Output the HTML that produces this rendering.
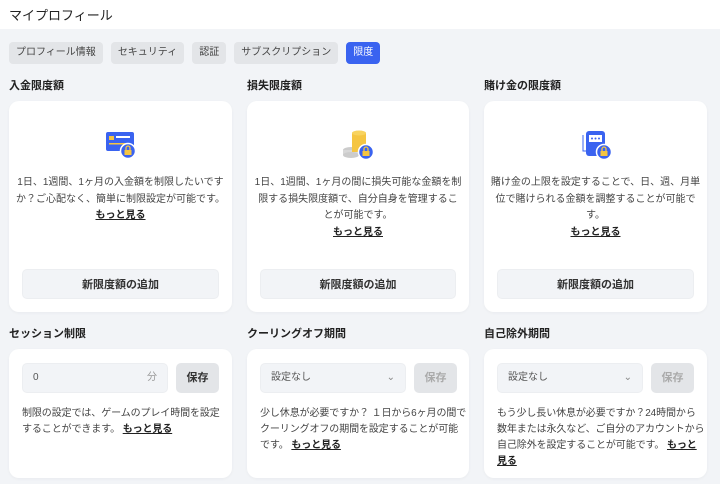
<!DOCTYPE html><html><head><meta charset="utf-8"><style>
*{margin:0;padding:0;box-sizing:border-box}
body{width:720px;height:484px;overflow:hidden;background:#f2f4f7;font-family:"Liberation Sans","Noto Sans CJK JP",sans-serif;color:#222;position:relative}
.hdr{position:absolute;left:0;top:0;width:720px;height:29px;background:#fff;font-size:13px;padding:5px 0 0 9px;color:#222}
.tabs{position:absolute;top:42px;left:9px;display:flex;gap:8px}
.tab{height:22px;line-height:22px;padding:0 7px;background:#e3e5e8;border-radius:4px;font-size:10px;color:#444}
.tab.a{background:#3a63f0;color:#fff}
.t{position:absolute;font-size:11px;font-weight:bold;color:#222}
.card{position:absolute;background:#fff;border-radius:10px;box-shadow:0 1px 3px rgba(0,0,0,.04)}
.ic{position:absolute;left:50%;top:29px;transform:translateX(-50%)}
.d{position:absolute;left:7px;right:7px;top:74px;font-size:10px;line-height:16.5px;color:#444;text-align:center}
.d u,.p u{font-weight:bold;color:#222}
.nw{white-space:nowrap;left:0;right:0}
.btn{position:absolute;left:13px;right:13px;top:168px;height:30px;background:#f2f4f7;border-radius:5px;font-size:11px;font-weight:bold;color:#333;text-align:center;line-height:30px;border:1px solid #eceef1}
.in{position:absolute;left:13px;top:14px;width:146px;height:30px;background:#f2f4f7;border-radius:5px;border:1px solid #eceef1;font-size:10px;color:#555;padding:0 10px;line-height:28px}
.sv{position:absolute;left:167px;top:14px;width:43px;height:30px;background:#e3e5e8;border-radius:5px;font-size:11px;font-weight:bold;line-height:30px;text-align:center;color:#333}
.sv.dis{color:#aaa}
.p{position:absolute;left:13px;right:3px;top:57px;font-size:10px;line-height:16px;color:#444;letter-spacing:-0.1px}
.p.nw{right:auto;left:13px}
</style></head><body>
<div class="hdr">マイプロフィール</div>
<div class="tabs"><div class="tab">プロフィール情報</div><div class="tab">セキュリティ</div><div class="tab">認証</div><div class="tab">サブスクリプション</div><div class="tab a">限度</div></div>

<div class="t" style="left:9px;top:77px">入金限度額</div>
<div class="t" style="left:247px;top:77px">損失限度額</div>
<div class="t" style="left:484px;top:77px">賭け金の限度額</div>

<div class="card" style="left:9px;top:101px;width:223px;height:211px">
<svg class="ic" width="32" height="30" viewBox="0 0 32 30"><rect x="1" y="2" width="28" height="19" rx="2" fill="#3a63f0"/><rect x="4" y="6" width="5" height="4" fill="#f5c542"/><rect x="11" y="6" width="14" height="2" fill="#fff"/><rect x="4" y="13" width="20" height="1.5" fill="#f5c542"/><circle cx="23" cy="21" r="7.5" fill="#3a63f0" stroke="#fff" stroke-width="1.5"/><rect x="19.5" y="20" width="7" height="5" fill="#f5c542"/><path d="M21 20v-2a2 2 0 0 1 4 0v2" stroke="#f5c542" fill="none" stroke-width="1.3"/></svg>
<div class="d">1日、1週間、1ヶ月の入金額を制限したいですか？ご心配なく、簡単に制限設定が可能です。<br><u>もっと見る</u></div>
<div class="btn">新限度額の追加</div></div>

<div class="card" style="left:247px;top:101px;width:222px;height:211px">
<svg class="ic" width="34" height="30" viewBox="0 0 34 30"><ellipse cx="10" cy="20" rx="8" ry="3" fill="#ccc"/><rect x="2" y="20" width="16" height="5" fill="#d8d8d8"/><ellipse cx="10" cy="25" rx="8" ry="3" fill="#ccc"/><rect x="11" y="3" width="14" height="19" fill="#f5c542"/><ellipse cx="18" cy="3" rx="7" ry="2.5" fill="#f8d35f"/><circle cx="25" cy="22" r="7.5" fill="#3a63f0" stroke="#fff" stroke-width="1.5"/><rect x="21.5" y="21" width="7" height="5" fill="#f5c542"/><path d="M23 21v-2a2 2 0 0 1 4 0v2" stroke="#f5c542" fill="none" stroke-width="1.3"/></svg>
<div class="d">1日、1週間、1ヶ月の間に損失可能な金額を制限する損失限度額で、自分自身を管理することが可能です。<br><u>もっと見る</u></div>
<div class="btn">新限度額の追加</div></div>

<div class="card" style="left:484px;top:101px;width:223px;height:211px">
<svg class="ic" width="32" height="30" viewBox="0 0 32 30"><path d="M3 5v16h4" stroke="#3a63f0" fill="none" stroke-width="1"/><rect x="6" y="1" width="19" height="25" rx="3" fill="#3a63f0"/><rect x="9" y="5" width="13" height="7" fill="#fff"/><circle cx="12" cy="8.5" r="1" fill="#3a63f0"/><circle cx="15.5" cy="8.5" r="1" fill="#3a63f0"/><circle cx="19" cy="8.5" r="1" fill="#3a63f0"/><circle cx="24" cy="22" r="7.5" fill="#3a63f0" stroke="#fff" stroke-width="1.5"/><rect x="20.5" y="21" width="7" height="5" fill="#f5c542"/><path d="M22 21v-2a2 2 0 0 1 4 0v2" stroke="#f5c542" fill="none" stroke-width="1.3"/></svg>
<div class="d nw">賭け金の上限を設定することで、日、週、月単<br>位で賭けられる金額を調整することが可能で<br>す。<br><u>もっと見る</u></div>
<div class="btn">新限度額の追加</div></div>

<div class="t" style="left:9px;top:325px">セッション制限</div>
<div class="t" style="left:247px;top:325px">クーリングオフ期間</div>
<div class="t" style="left:484px;top:325px">自己除外期間</div>

<div class="card" style="left:9px;top:349px;width:223px;height:129px">
<div class="in">0<span style="position:absolute;right:10px;color:#999">分</span></div>
<div class="sv">保存</div>
<div class="p nw">制限の設定では、ゲームのプレイ時間を設定<br>することができます。 <u>もっと見る</u></div></div>

<div class="card" style="left:247px;top:349px;width:222px;height:129px">
<div class="in">設定なし<span style="position:absolute;right:10px;color:#888">⌄</span></div>
<div class="sv dis">保存</div>
<div class="p nw">少し休息が必要ですか？ １日から6ヶ月の間で<br>クーリングオフの期間を設定することが可能<br>です。 <u>もっと見る</u></div></div>

<div class="card" style="left:484px;top:349px;width:223px;height:129px">
<div class="in">設定なし<span style="position:absolute;right:10px;color:#888">⌄</span></div>
<div class="sv dis">保存</div>
<div class="p nw">もう少し長い休息が必要ですか？24時間から<br>数年または永久など、ご自分のアカウントから<br>自己除外を設定することが可能です。 <u>もっと</u><br><u>見る</u></div></div>
</body></html>
